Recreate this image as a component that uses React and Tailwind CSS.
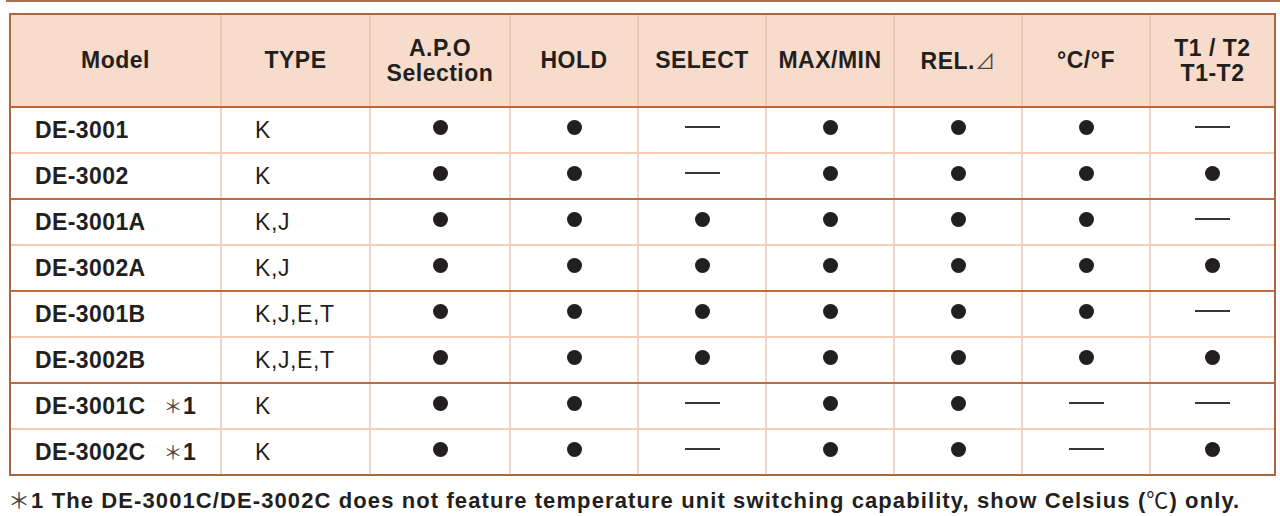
const COLS = [
  { key: 'model', label: ['Model'], w: 'w-[209px]' },
  { key: 'type', label: ['TYPE'], w: 'w-[149px]' },
  { key: 'apo', label: ['A.P.O', 'Selection'], w: 'w-[140px]' },
  { key: 'hold', label: ['HOLD'], w: 'w-[128px]' },
  { key: 'select', label: ['SELECT'], w: 'w-[128px]' },
  { key: 'maxmin', label: ['MAX/MIN'], w: 'w-[128px]' },
  { key: 'rel', label: ['REL.'], w: 'w-[128px]' },
  { key: 'unit', label: ['°C/°F'], w: 'w-[128px]' },
  { key: 't1t2', label: ['T1 / T2', 'T1-T2'], w: 'w-[125px]' },
];

// 1 = feature present, 0 = not available
const ROWS = [
  { model: 'DE-3001', type: 'K', f: [1, 1, 0, 1, 1, 1, 0] },
  { model: 'DE-3002', type: 'K', f: [1, 1, 0, 1, 1, 1, 1] },
  { model: 'DE-3001A', type: 'K,J', f: [1, 1, 1, 1, 1, 1, 0] },
  { model: 'DE-3002A', type: 'K,J', f: [1, 1, 1, 1, 1, 1, 1] },
  { model: 'DE-3001B', type: 'K,J,E,T', f: [1, 1, 1, 1, 1, 1, 0] },
  { model: 'DE-3002B', type: 'K,J,E,T', f: [1, 1, 1, 1, 1, 1, 1] },
  { model: 'DE-3001C', type: 'K', note: true, f: [1, 1, 0, 1, 1, 0, 0] },
  { model: 'DE-3002C', type: 'K', note: true, f: [1, 1, 0, 1, 1, 0, 1] },
];

const CJK = { fontFamily: '"Noto Sans CJK JP", "Liberation Sans", sans-serif' };

function Mark({ on }) {
  if (on) return <span className="block w-[15px] h-[15px] rounded-full bg-[#231f20] mb-[5px]" />;
  return <span className="block w-[35px] h-[1.5px] bg-[#3a3536] mb-[6px]" />;
}

function rowBorder(i) {
  if (i === ROWS.length - 1) return 'h-[44px]';
  if (i % 2 === 0) return 'h-[46px] border-b-2 border-[#f5cdb3]';
  return 'h-[46px] border-b-2 border-[#c26a3c]';
}

export default function App() {
  return (
    <div
      className="w-[1280px] h-[516px] bg-white text-[#231f20] overflow-hidden"
      style={{ fontFamily: '"Liberation Sans", Arial, sans-serif' }}
    >
      <div className="ml-[6px] h-[2px] bg-[#a8704e]" />

      <div className="ml-[9px] mt-[11px] w-[1267px] border-2 border-[#a9673f]">
        <div className="flex h-[93px] bg-[#f8dccb] border-b-2 border-[#c0643a]">
          {COLS.map((c, i) => (
            <div
              key={c.key}
              className={`${c.w} shrink-0 flex flex-col items-center justify-center font-bold text-[23px] leading-[25px] tracking-[0.5px] ${i > 0 ? 'border-l-2 border-[#ecc9b4]' : ''}`}
            >
              {c.label.map((l) => (
                <span key={l} className="whitespace-nowrap">
                  {l}
                  {c.key === 'rel' && <span className="font-normal text-[20px] text-[#4a4546]" style={CJK}>⊿</span>}
                </span>
              ))}
            </div>
          ))}
        </div>

        {ROWS.map((r, i) => (
          <div key={r.model} className={`flex ${rowBorder(i)}`}>
            <div className="w-[209px] shrink-0 flex items-center pl-[24px] font-bold text-[23px] tracking-[0.4px]">
              {r.model}
              {r.note && (
                <span className="ml-[18px] flex items-center">
                  <span className="font-normal text-[19px] text-[#4a4546]" style={CJK}>＊</span>
                  <span>1</span>
                </span>
              )}
            </div>
            <div className="w-[149px] shrink-0 flex items-center pl-[33px] text-[23px] tracking-[0.6px] border-l-2 border-[#ead6cf]">
              {r.type}
            </div>
            {r.f.map((v, j) => (
              <div
                key={j}
                className={`${COLS[j + 2].w} shrink-0 flex items-center justify-center border-l-2 border-[#ead6cf]`}
              >
                <Mark on={v === 1} />
              </div>
            ))}
          </div>
        ))}
      </div>

      <p className="mt-[9px] ml-[8px] font-bold text-[22px] leading-[26px] tracking-[1.1px] whitespace-nowrap">
        <span className="font-normal text-[#4a4546]" style={CJK}>＊</span>1 The DE-3001C/DE-3002C does not feature temperature unit switching capability, show Celsius (
        <span className="font-normal" style={CJK}>℃</span>) only.
      </p>
    </div>
  );
}
